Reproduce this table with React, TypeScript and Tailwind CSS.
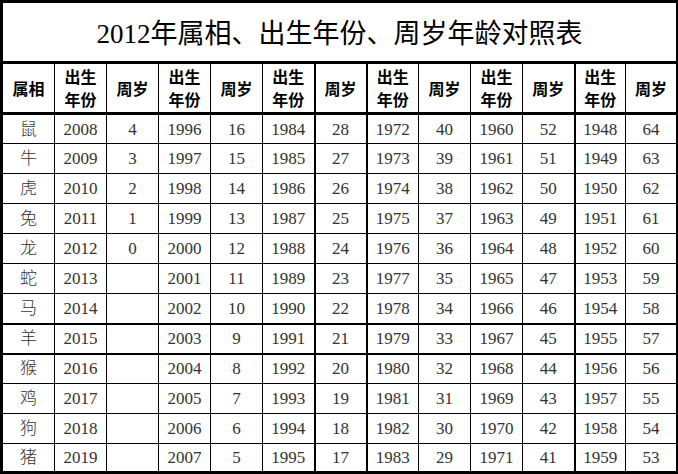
import React from "react";

const ANIMALS = ["鼠", "牛", "虎", "兔", "龙", "蛇", "马", "羊", "猴", "鸡", "狗", "猪"];
const WIDTHS = [53, 52, 52, 52, 52, 52, 52, 52, 52, 52, 52, 51, 52];
const BASES = [2008, 1996, 1984, 1972, 1960, 1948];

// columns whose left border is drawn heavier in the sheet
const thickLeft = (c: number) => c === 6 || c === 7 || c === 11;

const serif = { fontFamily: '"Liberation Serif", "Noto Sans CJK SC", serif' };

export default function App() {
  return (
    <div className="w-[678px] h-[474px] bg-white overflow-hidden" style={serif}>
      <table className="table-fixed border-collapse w-[677px] border-[3px] border-black text-[#333]">
        <colgroup>
          {WIDTHS.map((w, i) => (
            <col key={i} style={{ width: w }} />
          ))}
        </colgroup>
        <tbody>
          <tr className="h-[61px]">
            <td
              colSpan={13}
              className="border-[3px] border-black text-center text-[27px] leading-none text-black pt-1"
            >
              2012年属相、出生年份、周岁年龄对照表
            </td>
          </tr>
          <tr className="h-[51px]">
            {WIDTHS.map((_, c) => {
              const label = c === 0 ? "属相" : c % 2 === 1 ? "出生年份" : "周岁";
              return (
                <td
                  key={c}
                  className={`border border-black border-t-[3px] border-b-[3px] text-center text-black font-semibold text-[16px] leading-[23px] p-0 ${
                    thickLeft(c) ? "border-l-2" : ""
                  }`}
                  style={{ fontFamily: '"Noto Sans CJK SC", sans-serif' }}
                >
                  {label === "出生年份" ? (
                    <>
                      <div>出生</div>
                      <div>年份</div>
                    </>
                  ) : (
                    label
                  )}
                </td>
              );
            })}
          </tr>
          {ANIMALS.map((a, i) => {
            const cells: (string | number)[] = [a];
            BASES.forEach((b, k) => {
              const age = 4 + k * 12 - i;
              cells.push(b + i, age >= 0 ? age : "");
            });
            return (
              <tr key={a} className={i === 11 ? "h-[29px]" : "h-[30px]"}>
                {cells.map((v, c) => (
                  <td
                    key={c}
                    className={`border border-black text-center text-[17px] leading-none p-0 ${
                      c === 0 ? "font-light" : ""
                    } ${thickLeft(c) ? "border-l-2" : ""} ${
                      i === 7 || i === 8 ? "border-t-2" : ""
                    }`}
                  >
                    {v}
                  </td>
                ))}
              </tr>
            );
          })}
        </tbody>
      </table>
    </div>
  );
}
